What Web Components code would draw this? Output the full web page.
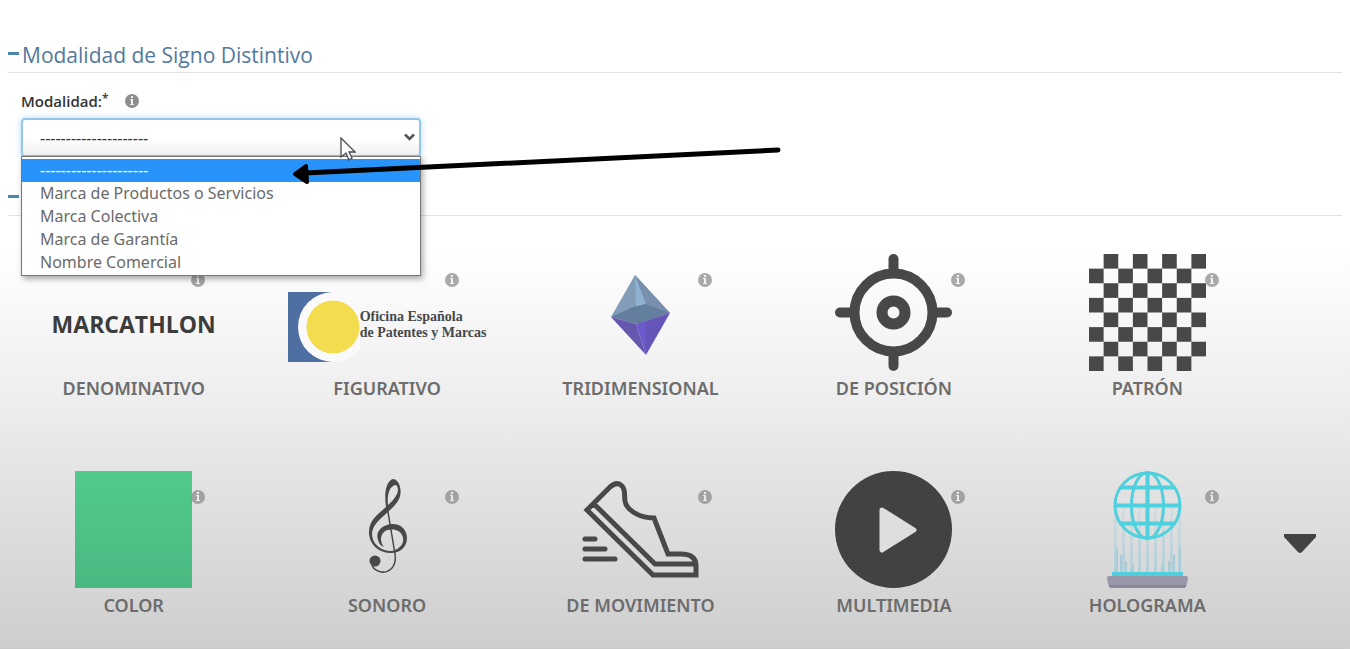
<!DOCTYPE html>
<html lang="es">
<head>
<meta charset="utf-8">
<title>Modalidad de Signo Distintivo</title>
<style>
  body { margin: 0; background: #fff; color: #333; font-family: "Open Sans", "Noto Sans", sans-serif; }
  main { padding-top: 38px; }
</style>
</head>
<body>
<main>
  <form-section heading="Modalidad de Signo Distintivo">
    <select-field label="Modalidad:" options="Marca de Productos o Servicios|Marca Colectiva|Marca de Garantía|Nombre Comercial"></select-field>
  </form-section>
  <form-section></form-section>
  <mark-gallery>
    <mark-card label="DENOMINATIVO"><word-logo></word-logo></mark-card>
    <mark-card label="FIGURATIVO"><office-logo></office-logo></mark-card>
    <mark-card label="TRIDIMENSIONAL">
      <svg width="117" height="117" viewBox="0 0 117 117" aria-hidden="true">
        <path d="M53 21 29 63 53 70 88 59Z" fill="#829db8"/>
        <path d="M53 21 54 53 64 50Z" fill="#8fb2d3"/>
        <path d="M53 21 64 50 88 59Z" fill="#7890ae"/>
        <path d="M29 63 51 53 64 50 88 59 56 70Z" fill="#647e9e"/>
        <path d="M29 63 54 70 64 101Z" fill="#6557ae"/>
        <path d="M54 70 64 67 64 101Z" fill="#6b59cd"/>
        <path d="M64 67 88 59 64 101Z" fill="#6655b8"/>
      </svg>
    </mark-card>
    <mark-card label="DE POSICIÓN">
      <svg width="117" height="117" viewBox="0 0 117 117" fill="none" stroke="#484848" stroke-width="10" stroke-linecap="round" aria-hidden="true">
        <circle cx="58.500" cy="58.500" r="39"/><circle cx="58.500" cy="58.500" r="11.500" stroke-width="11"/>
        <path d="M58.500 5V16M58.500 101V112M5 58.500H16M101 58.500H112"/>
      </svg>
    </mark-card>
    <mark-card label="PATRÓN">
      <svg width="117" height="117" viewBox="0 0 8 8" aria-hidden="true">
        <defs><pattern id="checks" width="2" height="2" patternUnits="userSpaceOnUse"><path d="M1 0H2V1H1ZM0 1H1V2H0Z" fill="#484848"/></pattern></defs>
        <rect width="8" height="8" fill="url(#checks)"/>
      </svg>
    </mark-card>
    <mark-card label="COLOR">
      <svg width="117" height="117" viewBox="0 0 117 117" aria-hidden="true">
        <defs><linearGradient id="green" x2="0" y2="1"><stop stop-color="#51ca8c"/><stop offset="1" stop-color="#4ab981"/></linearGradient></defs>
        <rect width="117" height="117" fill="url(#green)"/>
      </svg>
    </mark-card>
    <mark-card label="SONORO">
      <svg width="117" height="117" viewBox="0 0 117 117" aria-hidden="true">
        <path fill="#484848" fill-rule="evenodd" d="M64 8C57 10 55 22 57 36C49 43 39 50 40 63C41 75 51 82 62 82C71 82 78 76 78 67C78 58 71 52 62 53C53 54 46 61 49 69C50 73 52 75 55 76C51 71 51 65 55 61C60 57 70 58 73 64C77 72 70 79 62 80C52 80 43 73 43 63C43 53 54 46 62 38C70 31 73 24 71 16C70 11 67 8 64 8ZM67 14C71 18 69 25 59 34C58 24 60 15 67 14Z"/>
        <path fill="none" stroke="#484848" stroke-width="1.500" d="M58 35 66 83C68 96 60 102 52 101C47 100 43 97 43 92"/>
        <circle cx="46" cy="90" r="5.500" fill="#484848"/>
      </svg>
    </mark-card>
    <mark-card label="DE MOVIMIENTO">
      <svg width="117" height="117" viewBox="0 0 117 117" fill="none" stroke="#484848" stroke-width="5" stroke-linecap="round" stroke-linejoin="miter" aria-hidden="true">
        <path d="M5 39 28 16Q35 10 40 15C44 19 42 26 43 30C44 38 56 47 72 47L86 83H99Q114 83 114 95V104H71L5 39ZM12 33 73 93H112"/>
        <path d="M3 68H13M3 78H23M3 88H33"/>
      </svg>
    </mark-card>
    <mark-card label="MULTIMEDIA">
      <svg width="117" height="117" viewBox="0 0 117 117" aria-hidden="true">
        <circle cx="58.500" cy="58.500" r="58.500" fill="#424242"/>
        <path d="M47 39 79 59 47 79Z" fill="#dedede" stroke="#dedede" stroke-width="5" stroke-linejoin="round"/>
      </svg>
    </mark-card>
    <mark-card label="HOLOGRAMA">
      <svg width="117" height="117" viewBox="0 0 117 117" fill="none" aria-hidden="true">
        <defs><linearGradient id="beam" x2="0" y2="1"><stop stop-color="#bcd5de" stop-opacity=".3"/><stop offset="1" stop-color="#b2ced8"/></linearGradient></defs>
        <path fill="url(#beam)" d="M25 36H28V104H25ZM33 36H36V104H33ZM41 36H44V104H41ZM49 36H52V104H49ZM57 36H60V104H57ZM65 36H68V104H65ZM73 36H76V104H73ZM81 36H84V104H81ZM89 36H92V104H89Z"/>
        <path stroke="#a6ccd7" stroke-width="2" d="M28 78V102M32 84V102M37 90V102M44 94V102M73 94V102M80 90V102M85 84V102M91 78V102"/>
        <g stroke="#4fd0dd" stroke-width="4"><circle cx="58.500" cy="34.500" r="32.500" stroke-width="3"/><ellipse cx="58.500" cy="34.500" rx="16" ry="33" stroke-width="3"/><path d="M58.500 2V67M26 34.500H91M32 16.500H85M32 52.500H85"/></g>
        <path fill="#4fd0dd" d="M23 101H94V106H23Z"/>
        <path fill="#9998a9" d="M20 105H97Q99 105 99 108L97 116H20L18 108Q18 105 20 105Z"/>
        <path fill="#89889b" d="M20 114H97L96 117H21Z"/>
      </svg>
    </mark-card>
  </mark-gallery>
</main>

<script>
const define = (name, html, setup) => {
  const template = document.createElement('template');
  template.innerHTML = html;
  customElements.define(name, class extends HTMLElement {
    constructor() {
      super();
      this.attachShadow({ mode: 'open' }).append(template.content.cloneNode(true));
    }
    connectedCallback() { if (setup) setup(this, this.shadowRoot); }
  });
};

define('info-button', `
  <style>
    :host { display: block; width: 14px; height: 14px; }
    button { display: block; padding: 0; border: 0; background: none; }
    svg { display: block; }
  </style>
  <button type="button" aria-label="Información">
    <svg width="14" height="14" viewBox="0 0 14 14"><circle cx="7" cy="7" r="7" fill="#8e8e8e"/>
    <path fill="#fff" fill-opacity=".85" d="M6 2H8V4H6ZM5 5H8V10H9V11H5V10H6V6H5Z"/></svg>
  </button>`);

define('form-section', `
  <style>
    :host { display: block; margin: 0 8px; }
    header { display: flex; align-items: center; gap: 3px; height: 34px; border-bottom: 1px solid #e2e2e2; }
    button { width: 11px; height: 3px; margin-bottom: 4px; padding: 0; border: 0; background: #4a86ad; }
    h2 { margin: 0; font-size: 21px; line-height: 34px; font-weight: 400; color: #53799d; }
  </style>
  <header><button type="button" aria-label="Contraer sección"></button><h2></h2></header>
  <slot></slot>`,
  (host, root) => {
    const title = host.getAttribute('heading');
    if (title) root.querySelector('h2').textContent = title;
    else root.querySelector('h2').remove();
  });

define('select-field', `
  <style>
    :host { display: block; padding: 16px 13px 24px; }
    .caption { display: flex; align-items: center; gap: 17px; height: 24px; margin-bottom: 5px; }
    label { font-size: 15px; line-height: 24px; font-weight: 600; color: #333; }
    sup { font-size: 12px; line-height: 1; vertical-align: 4px; }
    .box { position: relative; width: 400px; max-width: 100%; z-index: 1; }
    select {
      display: block; appearance: none; box-sizing: border-box; width: 100%; height: 39px; padding: 0 17px;
      font: 16px "Noto Sans", sans-serif; color: #333;
      border: 2px solid #93c6ea; border-radius: 4px; outline: 0;
      background: linear-gradient(#fff 50%, #f1f1f1); box-shadow: 0 0 7px #b5dcf5;
    }
    .chevron { position: absolute; right: 6px; top: 15px; }
    ul {
      position: absolute; left: 0; right: 0; top: 38px; margin: 0; padding: 2px 0 1px; list-style: none;
      background: #fff; border: 1px solid #777; box-shadow: 2px 3px 6px #0005;
    }
    li { padding: 0 18px; font: 16px/23px "Noto Sans", sans-serif; color: #6a6a6a; }
    li[aria-selected="true"] { background: #2894fb; color: #fff; }
    .cursor { position: absolute; left: 319px; top: 19px; }
    .arrow { position: absolute; left: 269px; top: 22px; }
  </style>
  <div class="caption"><label for="choice"><span></span><sup>*</sup></label><info-button></info-button></div>
  <div class="box">
    <select id="choice"><option>---------------------</option></select>
    <svg class="chevron" width="11" height="8" viewBox="0 0 11 8" fill="none" stroke="#555" stroke-width="2.500"><path d="M1 1.500 5.500 6 10 1.500"/></svg>
    <ul role="listbox"><li role="option" aria-selected="true">---------------------</li></ul>
    <svg class="cursor" width="16" height="24" viewBox="0 0 16 24"><path d="M1 1V20L6 16L9 23L12 21L9 15H15Z" fill="#fff" stroke="#4a4a55" stroke-width="1.300"/></svg>
    <svg class="arrow" width="494" height="48" viewBox="0 0 494 48" stroke="#000" stroke-linecap="round" stroke-linejoin="round"><path d="M15 33 488 10" stroke-width="5"/><path d="M5 34 16 26 17 42Z" stroke-width="4"/></svg>
  </div>`,
  (host, root) => {
    root.querySelector('label span').textContent = host.getAttribute('label');
    for (const text of host.getAttribute('options').split('|')) {
      root.querySelector('select').add(new Option(text));
      const item = document.createElement('li');
      item.setAttribute('role', 'option');
      item.textContent = text;
      root.querySelector('ul').append(item);
    }
  });

define('mark-gallery', `
  <style>
    :host {
      display: grid; grid-template-columns: 1fr 52px; gap: 0; padding: 38px 24px 32px 7px;
      background: linear-gradient(#fff 8%, #eee 42%, #e7e7e7 54%, #cecece);
    }
    .grid { display: grid; grid-template-columns: repeat(5, 1fr); row-gap: 71px; }
    button { align-self: end; justify-self: center; margin-bottom: 63px; padding: 0; border: 0; background: none; }
    svg { display: block; }
  </style>
  <div class="grid"><slot></slot></div>
  <button type="button" aria-label="Ver más"><svg width="32" height="20" viewBox="0 0 32 20"><path d="M0 0H32V3L18 18Q16 20 14 18L0 3Z" fill="#424242"/></svg></button>`);

define('mark-card', `
  <style>
    :host { display: block; }
    figure { margin: 0; display: flex; flex-direction: column; align-items: center; gap: 5px; }
    .art { position: relative; width: 117px; height: 117px; display: flex; align-items: center; justify-content: center; }
    info-button { position: absolute; left: 116px; top: 19px; opacity: .75; }
    figcaption { font: 600 18px/24px "Noto Sans", sans-serif; color: #6c6c6c; white-space: nowrap; }
  </style>
  <figure><div class="art"><slot></slot><info-button></info-button></div><figcaption></figcaption></figure>`,
  (host, root) => { root.querySelector('figcaption').textContent = host.getAttribute('label'); });

define('word-logo', `
  <style>
    :host { display: block; flex: none; padding-top: 22px; font-size: 23px; line-height: 28px; font-weight: 700; color: #3c3c3c; }
  </style>MARCATHLON`);

define('office-logo', `
  <style>
    :host { display: flex; flex: none; align-items: center; padding-top: 28px; }
    svg { display: block; }
    p { margin: 0 0 4px; font: 700 14px/16px "Liberation Serif", serif; color: #484848; white-space: nowrap; }
  </style>
  <svg width="72" height="70" viewBox="0 0 72 70" aria-hidden="true">
    <path fill="#4d6fa1" d="M0 0H43V70H0Z"/><circle cx="45" cy="35" r="35" fill="#fafafa"/><circle cx="45" cy="35" r="26.500" fill="#f4dc4f"/>
  </svg>
  <p>Oficina Española<br>de Patentes y Marcas</p>`);
</script>
</body>
</html>
